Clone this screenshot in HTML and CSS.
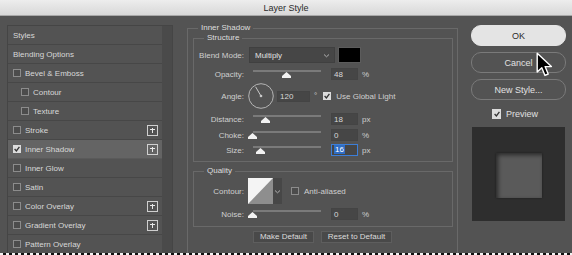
FILE: index.html
```html
<!DOCTYPE html>
<html>
<head>
<meta charset="utf-8">
<title>Layer Style</title>
<link rel="stylesheet" href="styles.css">
</head>
<body>
<div class="titlebar">Layer Style</div>

<div class="main">

  <!-- effect list -->
  <div class="styles-panel">
    <ul class="style-list">
      <li class="row">Styles</li>
      <li class="row">Blending Options</li>
      <li class="row"><span class="cb"></span>Bevel &amp; Emboss</li>
      <li class="row sub"><span class="cb"></span>Contour</li>
      <li class="row sub"><span class="cb"></span>Texture</li>
      <li class="row"><span class="cb"></span>Stroke<span class="add"></span></li>
      <li class="row active"><span class="cb on"></span>Inner Shadow<span class="add"></span></li>
      <li class="row"><span class="cb"></span>Inner Glow</li>
      <li class="row"><span class="cb"></span>Satin</li>
      <li class="row"><span class="cb"></span>Color Overlay<span class="add"></span></li>
      <li class="row"><span class="cb"></span>Gradient Overlay<span class="add"></span></li>
      <li class="row"><span class="cb"></span>Pattern Overlay</li>
    </ul>
    <div class="scroll"></div>
  </div>

  <!-- settings -->
  <fieldset class="effect">
    <legend>Inner Shadow</legend>

    <fieldset class="group structure">
      <legend>Structure</legend>
      <div class="field blend">
        <label>Blend Mode:</label>
        <div class="select">Multiply
          <svg width="7" height="5" viewBox="0 0 7 5"><path d="M1 1.5 L3.5 3.8 L6 1.5" stroke="#b0b0b0" fill="none" stroke-width="1"/></svg>
        </div>
        <span class="swatch"></span>
      </div>
      <div class="field opacity">
        <label>Opacity:</label>
        <div class="slider"><span class="thumb" style="left:28.5px"></span></div>
        <span class="num">48</span><span class="unit">%</span>
      </div>
      <div class="field angle">
        <label>Angle:</label>
        <svg class="dial" width="26" height="26" viewBox="0 0 26 26">
          <circle cx="13" cy="13" r="12.3" fill="none" stroke="#b4b4b4" stroke-width="1"/>
          <line x1="13" y1="13" x2="7.6" y2="3.8" stroke="#c8c8c8" stroke-width="1"/>
          <circle cx="13" cy="13" r="1.3" fill="#c8c8c8"/>
        </svg>
        <span class="num wide">120</span><span class="deg">°</span>
        <span class="cb on"></span><span class="cb-text">Use Global Light</span>
      </div>
      <div class="field distance">
        <label>Distance:</label>
        <div class="slider"><span class="thumb" style="left:7.5px"></span></div>
        <span class="num">18</span><span class="unit">px</span>
      </div>
      <div class="field choke">
        <label>Choke:</label>
        <div class="slider"><span class="thumb" style="left:-5.5px"></span></div>
        <span class="num">0</span><span class="unit">%</span>
      </div>
      <div class="field size">
        <label>Size:</label>
        <div class="slider"><span class="thumb" style="left:2.5px"></span></div>
        <span class="num focus"><span class="sel">16</span></span><span class="unit">px</span>
      </div>
    </fieldset>

    <fieldset class="group quality">
      <legend>Quality</legend>
      <div class="field contour">
        <label>Contour:</label>
        <svg class="curve" width="25" height="26" viewBox="0 0 25 26">
          <rect width="25" height="26" fill="#f4f4f4"/>
          <polygon points="0,26 25,0 25,26" fill="#8e8e8e"/>
        </svg>
        <span class="drop">
          <svg width="7" height="5" viewBox="0 0 7 5"><path d="M1 1.5 L3.5 3.8 L6 1.5" stroke="#b0b0b0" fill="none" stroke-width="1"/></svg>
        </span>
        <span class="cb"></span><span class="cb-text">Anti-aliased</span>
      </div>
      <div class="field noise">
        <label>Noise:</label>
        <div class="slider"><span class="thumb" style="left:-5.5px"></span></div>
        <span class="num">0</span><span class="unit">%</span>
      </div>
    </fieldset>

    <div class="defaults">
      <span class="small-btn make">Make Default</span>
      <span class="small-btn reset">Reset to Default</span>
    </div>
  </fieldset>

  <!-- dialog buttons -->
  <div class="actions">
    <div class="btn primary">OK</div>
    <div class="btn">Cancel</div>
    <div class="btn">New Style...</div>
    <div class="preview-toggle"><span class="cb on big"></span>Preview</div>
    <div class="preview">
      <div class="preview-square"></div>
    </div>
  </div>

  <svg class="cursor" width="18" height="26" viewBox="0 0 18 26">
    <path d="M1.2 1.2 V20 L5.8 15.7 L9 23.4 L12.2 22 L9.1 14.6 L15.4 14.6 Z" fill="#000" stroke="#fff" stroke-width="1.4" stroke-linejoin="round"/>
  </svg>
</div>

<div class="ants"></div>
</body>
</html>
```

FILE: styles.css
```css
* {
	box-sizing: border-box;
}
html, body {
	margin: 0;
	padding: 0;
}
body {
	width: 572px;
	height: 255px;
	overflow: hidden;
	background: #535353;
	font-family: "Liberation Sans", Arial, Helvetica, sans-serif;
	font-size: 8px;
	color: #d6d6d6;
	display: flex;
	flex-direction: column;
}
.titlebar {
	flex: none;
	height: 16px;
	padding-top: 1px;
	background: linear-gradient(#ededed, #d8d8d8);
	border-bottom: 1px solid #a8a8a8;
	color: #2a2a2a;
	font-size: 9px;
	line-height: 14px;
	text-align: center;
}
.main {
	flex: 1;
	display: flex;
	align-items: flex-start;
	overflow: hidden;
	position: relative;
}
.ants {
	flex: none;
	height: 2px;
	background: repeating-linear-gradient(90deg, #f2f2f2 0 3px, #111 3px 6px);
}

/* effect list */
.styles-panel {
	flex: none;
	display: flex;
	margin: 9px 0 0 7px;
	width: 166px;
	border: 1px solid #454545;
	background: #4b4b4b;
}
.style-list {
	list-style: none;
	margin: 0;
	padding: 0;
	width: 154px;
}
.row {
	height: 19px;
	display: flex;
	align-items: center;
	padding: 0 4px 0 5px;
	background: #535353;
	border-bottom: 1px solid #474747;
	color: #d8d8d8;
}
.row.sub {
	padding-left: 13px;
}
.row.active {
	background: #646464;
	border-bottom-color: #5a5a5a;
}
.scroll {
	width: 10px;
	background: #4a4a4a;
}
.cb {
	flex: none;
	display: inline-block;
	width: 8px;
	height: 8px;
	border: 1px solid #8c8c8c;
	background: #4c4c4c;
	margin-right: 4px;
}
.cb.on {
	border-color: #dcdcdc;
	background: #dcdcdc url("data:image/svg+xml;utf8,<svg xmlns='http://www.w3.org/2000/svg' width='6' height='6' viewBox='0 0 6 6'><path d='M0.6 3 L2.4 4.9 L5.4 0.8' stroke='%23333' stroke-width='1.3' fill='none'/></svg>") center / 6px 6px no-repeat;
}
.cb.big {
	width: 9px;
	height: 10px;
}
.add {
	margin-left: auto;
	width: 11px;
	height: 11px;
	border: 1px solid #cfcfcf;
	background:
		linear-gradient(#e8e8e8, #e8e8e8) center / 5px 1.4px no-repeat,
		linear-gradient(#e8e8e8, #e8e8e8) center / 1.4px 5px no-repeat;
}

/* settings */
fieldset {
	margin: 0;
	min-width: 0;
	border: 1px solid #696969;
}
legend {
	padding: 0 3px;
	line-height: 10px;
	color: #dedede;
}
.effect {
	flex: none;
	margin: 7px 0 0 14px;
	width: 271px;
	padding: 0 4px 40px 5px;
}
.effect > legend {
	margin-left: 5px;
}
.group {
	padding: 0 0 5px 0;
}
.group > legend {
	margin-left: 10px;
}
.structure {
	margin-top: 0;
}
.structure .blend {
	margin-top: 4px;
}
.quality {
	margin-top: 4px;
	padding-bottom: 6px;
}
.field {
	display: flex;
	align-items: center;
	height: 12px;
	color: #cfcfcf;
}
.field label {
	flex: none;
	width: 50px;
	text-align: right;
}
.field.blend {
	height: 16px;
}
.field.opacity { margin-top: 5px; }
.field.angle { margin-top: 3px; height: 26px; }
.field.distance { margin-top: 4px; }
.field.choke { margin-top: 4px; }
.field.size { margin-top: 3px; }
.field.contour { margin-top: 2px; height: 26px; }
.field.noise { margin-top: 4px; }

.select {
	display: flex;
	align-items: center;
	justify-content: space-between;
	margin-left: 5px;
	width: 86px;
	height: 16px;
	padding: 0 4px 0 5px;
	background: #464646;
	border: 1px solid #404040;
	color: #e0e0e0;
}
.swatch {
	margin-left: 3px;
	width: 23px;
	height: 16px;
	background: #000;
	border: 1px solid #5c5c5c;
}
.slider {
	flex: none;
	position: relative;
	margin-left: 9px;
	width: 68px;
	height: 12px;
	background: linear-gradient(#7a7a7a, #7a7a7a) 0 2px / 100% 2px no-repeat;
}
.thumb {
	position: absolute;
	top: 4px;
	width: 9px;
	height: 6px;
	background: url("data:image/svg+xml;utf8,<svg xmlns='http://www.w3.org/2000/svg' width='9' height='6' viewBox='0 0 9 6'><path d='M4.5 0 L9 4 V6 H0 V4 Z' fill='%23f2f2f2'/></svg>") no-repeat;
}
.num {
	flex: none;
	margin-left: 10px;
	width: 27px;
	height: 12px;
	line-height: 12px;
	padding-left: 2px;
	background: #464646;
	border: 1px solid #444;
	color: #d8d8d8;
}
.num.wide {
	margin-left: 3px;
	width: 33px;
	height: 11px;
	line-height: 10px;
}
.num.focus {
	border-color: #3c7ed8;
	line-height: 10px;
}
.sel {
	background: #2f6dc4;
	color: #fff;
	padding: 0 1px;
}
.unit {
	margin-left: 4px;
}
.dial {
	flex: none;
	margin-left: 4px;
}
.deg {
	margin-left: 4px;
	align-self: flex-start;
	margin-top: 8px;
}
.angle .cb {
	margin-left: 6px;
	margin-right: 5px;
}
.curve {
	flex: none;
	margin-left: 4px;
}
.drop {
	display: flex;
	align-items: center;
	justify-content: center;
	width: 9px;
	height: 26px;
	background: #474747;
}
.contour .cb {
	margin-left: 9px;
	margin-right: 5px;
}
.defaults {
	display: flex;
	margin: 4px 0 0 60px;
	gap: 7px;
}
.small-btn {
	height: 12px;
	line-height: 10px;
	text-align: center;
	background: #494949;
	border: 1px solid #5e5e5e;
	color: #dcdcdc;
}
.small-btn.make { width: 61px; }
.small-btn.reset { width: 71px; }

/* dialog buttons */
.actions {
	flex: none;
	display: flex;
	flex-direction: column;
	margin: 9px 0 0 13px;
	width: 95px;
	font-size: 9px;
}
.btn {
	height: 21px;
	display: flex;
	align-items: center;
	justify-content: center;
	border: 1px solid #7a7a7a;
	border-radius: 10px;
	color: #e2e2e2;
}
.btn + .btn {
	margin-top: 6px;
}
.btn.primary {
	background: #e4e4e4;
	border-color: #e4e4e4;
	color: #2c2c2c;
}
.preview-toggle {
	display: flex;
	align-items: center;
	margin-top: 9px;
	padding-left: 21px;
	height: 10px;
	color: #e0e0e0;
}
.preview-toggle .cb {
	margin-right: 5px;
}
.preview {
	margin: 8px 0 0 1px;
	width: 93px;
	height: 94px;
	padding: 26px 0 0 24px;
	background: #2e2e2e;
}
.preview-square {
	width: 46px;
	height: 45px;
	background: #5a5a5a;
	box-shadow: inset 2px 2px 4px rgba(0, 0, 0, 0.55), 0 0 2px rgba(0, 0, 0, 0.4);
}
.cursor {
	position: absolute;
	left: 536px;
	top: 36px;
}
```
